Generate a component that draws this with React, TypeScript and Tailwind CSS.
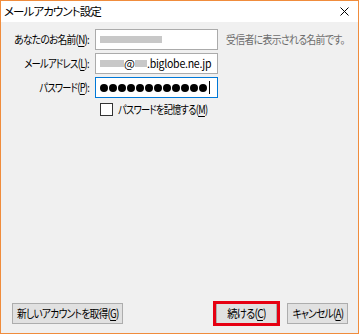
import React from "react";

const font = { fontFamily: '"Noto Sans CJK JP", "Noto Sans", sans-serif', fontFeatureSettings: '"palt"' } as React.CSSProperties;

function U({ c }: { c: string }) {
  return <span className="underline underline-offset-[2px]">{c}</span>;
}

function Dots() {
  return (
    <div className="flex items-center gap-[1px]">
      {Array.from({ length: 12 }).map((_, i) => (
        <span key={i} className="block w-[8px] h-[8px] rounded-full bg-black" />
      ))}
      <span className="block w-[1px] h-[13px] bg-black ml-[1px]" />
    </div>
  );
}

export default function App() {
  return (
    <div style={font} className="w-[359px] h-[334px] border border-[#f08c3c] flex flex-col bg-[#f0f0f0] text-[11.5px] leading-none text-black overflow-hidden whitespace-nowrap">
      <div className="h-[21px] bg-white flex items-center justify-between pl-[3px] pr-[9px]">
        <span className="tracking-[-0.9px]">メールアカウント設定</span>
        <svg width="9" height="9" viewBox="0 0 9 9" className="mb-[1px]">
          <path d="M0.5 0.5 L8.5 8.5 M8.5 0.5 L0.5 8.5" stroke="#000" strokeWidth="1" />
        </svg>
      </div>
      <div className="flex-1 flex flex-col pt-[7px]">
        <div className="flex flex-col gap-[3px]">
          <div className="flex items-center h-[21px]">
            <div className="w-[88px] flex justify-end tracking-[-0.9px]"><span className="inline-block origin-right scale-x-[0.85]">あなたのお名前(<U c="N" />):</span></div>
            <div className="ml-[6px] w-[123px] h-[21px] bg-white border border-[#ababab] flex items-center pl-[4px] shrink-0">
              <span className="block w-[62px] h-[7px] bg-[#c8c8c8]" />
            </div>
            <div className="ml-[8px] text-[#6d6d6d] tracking-[-0.8px]"><span className="inline-block origin-left scale-x-[0.86]">受信者に表示される名前です。</span></div>
          </div>
          <div className="flex items-center h-[21px]">
            <div className="w-[88px] flex justify-end tracking-[-0.9px]"><span className="inline-block origin-right scale-x-[0.81]">メールアドレス(<U c="L" />):</span></div>
            <div className="ml-[6px] w-[123px] h-[21px] bg-white border border-[#ababab] flex items-center pl-[4px] shrink-0 overflow-hidden">
              <span className="block w-[24px] h-[7px] bg-[#c8c8c8] shrink-0" />
              <span className="tracking-[-0.8px]">@</span>
              <span className="block w-[12px] h-[7px] bg-[#c8c8c8] shrink-0 ml-[1px]" />
              <span className="tracking-[-0.3px] inline-block origin-left scale-x-[0.92]">.biglobe.ne.jp</span>
            </div>
          </div>
          <div className="flex items-center h-[21px]">
            <div className="w-[88px] flex justify-end tracking-[-0.9px]"><span className="inline-block origin-right scale-x-[0.8]">パスワード(<U c="P" />):</span></div>
            <div className="ml-[6px] w-[123px] h-[21px] bg-white border border-[#0078d7] flex items-center pl-[4px] shrink-0">
              <Dots />
            </div>
          </div>
        </div>
        <div className="flex items-center mt-[5px] ml-[99px]">
          <span className="block w-[13px] h-[13px] bg-white border border-[#333]" />
          <span className="ml-[5px] tracking-[-0.9px] inline-block origin-left scale-x-[0.8]">パスワードを記憶する(<U c="M" />)</span>
        </div>
        <div className="flex-1" />
        <div className="flex items-center pl-[11px] pr-[10px] pb-[9px]">
          <button className="w-[111px] h-[21px] bg-[#e1e1e1] border border-[#adadad] tracking-[-0.9px] whitespace-nowrap flex items-center justify-center overflow-visible"><span className="inline-block scale-x-[0.85]">新しいアカウントを取得(<U c="G" />)</span></button>
          <div className="flex-1" />
          <div className="relative">
            <button className="w-[61px] h-[21px] bg-[#e1e1e1] border border-[#adadad] tracking-[-0.9px] whitespace-nowrap flex items-center justify-center"><span className="inline-block scale-x-[0.9]">続ける(<U c="C" />)</span></button>
            <span className="absolute -left-[3px] -right-[3px] -top-[2px] -bottom-[2px] border-[3px] border-[#e60012]" />
          </div>
          <button className="ml-[10px] w-[61px] h-[21px] bg-[#e1e1e1] border border-[#adadad] tracking-[-0.9px] whitespace-nowrap flex items-center justify-center"><span className="inline-block scale-x-[0.85]">キャンセル(<U c="A" />)</span></button>
        </div>
      </div>
    </div>
  );
}
